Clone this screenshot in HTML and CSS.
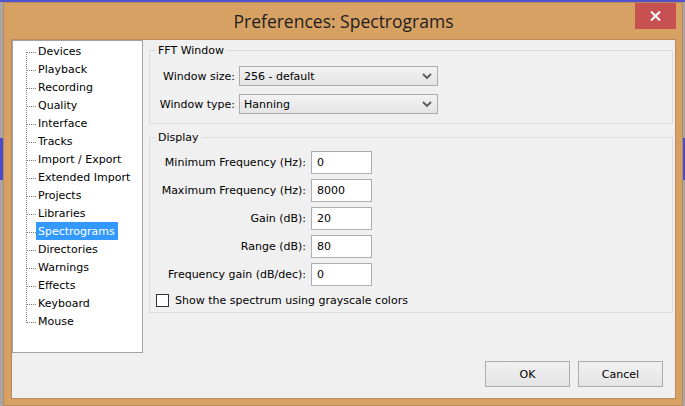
FILE: index.html
```html
<!DOCTYPE html>
<html>
<head>
<meta charset="utf-8">
<title>Preferences: Spectrograms</title>
<link rel="stylesheet" href="styles.css">
</head>
<body>
<div class="desktop">
  <div class="window">
    <div class="titlebar">
      <span class="title">Preferences: Spectrograms</span>
      <button class="close" aria-label="Close">
        <svg width="11" height="10" viewBox="0 0 11 10"><path d="M1 0.5 L10 9.5 M10 0.5 L1 9.5" stroke="#fff" stroke-width="2" fill="none"/></svg>
      </button>
    </div>
    <div class="client">
      <div class="main">
        <ul class="tree">
          <li><span>Devices</span></li>
          <li><span>Playback</span></li>
          <li><span>Recording</span></li>
          <li><span>Quality</span></li>
          <li><span>Interface</span></li>
          <li><span>Tracks</span></li>
          <li><span>Import / Export</span></li>
          <li><span>Extended Import</span></li>
          <li><span>Projects</span></li>
          <li><span>Libraries</span></li>
          <li><span class="sel">Spectrograms</span></li>
          <li><span>Directories</span></li>
          <li><span>Warnings</span></li>
          <li><span>Effects</span></li>
          <li><span>Keyboard</span></li>
          <li><span>Mouse</span></li>
        </ul>
        <div class="panel">
          <fieldset class="group fft">
            <legend>FFT Window</legend>
            <div class="fft-form">
              <label>Window size:</label>
              <div class="combo"><span>256 - default</span><svg width="10" height="6" viewBox="0 0 10 6"><path d="M1 1 L5 5 L9 1" stroke="#5a5a5a" stroke-width="1.8" fill="none"/></svg></div>
              <label>Window type:</label>
              <div class="combo"><span>Hanning</span><svg width="10" height="6" viewBox="0 0 10 6"><path d="M1 1 L5 5 L9 1" stroke="#5a5a5a" stroke-width="1.8" fill="none"/></svg></div>
            </div>
          </fieldset>
          <fieldset class="group display">
            <legend>Display</legend>
            <div class="display-form">
              <label>Minimum Frequency (Hz):</label>
              <div class="text">0</div>
              <label>Maximum Frequency (Hz):</label>
              <div class="text">8000</div>
              <label>Gain (dB):</label>
              <div class="text">20</div>
              <label>Range (dB):</label>
              <div class="text">80</div>
              <label>Frequency gain (dB/dec):</label>
              <div class="text">0</div>
              <div class="check-row"><span class="checkbox"></span><span>Show the spectrum using grayscale colors</span></div>
            </div>
          </fieldset>
        </div>
      </div>
      <div class="buttons">
        <button class="btn">OK</button>
        <button class="btn">Cancel</button>
      </div>
    </div>
  </div>
</div>
</body>
</html>
```

FILE: styles.css
```css
* { box-sizing: border-box; }

html, body {
  margin: 0;
  width: 685px;
  height: 406px;
  overflow: hidden;
}

body {
  font-family: "DejaVu Sans", sans-serif;
  font-size: 11px;
  color: #000;
  background:
    linear-gradient(to bottom, #5252cc 0, #5252cc 2px, transparent 2px),
    linear-gradient(to bottom, #a6a6a6 0, #a6a6a6 138px, #4b4bcf 138px, #4b4bcf 180px, #a6a6a6 180px);
}

.desktop {
  padding: 2px 0 0 3px;
}

.window {
  width: 680px;
  height: 404px;
  background: #d7a164;
  border: 1px solid #b8895a;
  padding: 0 6px 6px 7px;
  display: flex;
  flex-direction: column;
}

.titlebar {
  height: 36px;
  flex: none;
  display: grid;
  grid-template-columns: 1fr auto 1fr;
  align-items: center;
}

.title {
  grid-column: 2;
  font-family: "Open Sans", sans-serif;
  font-size: 17.5px;
  color: #1e1e1e;
  white-space: nowrap;
}

.close {
  grid-column: 3;
  justify-self: end;
  align-self: start;
  width: 41px;
  height: 26px;
  border: 0;
  padding: 0;
  background: #c75050;
  display: flex;
  align-items: center;
  justify-content: center;
}

.client {
  height: 360px;
  flex: none;
  border: 1px solid #b88b5c;
  background: #f0f0f0;
  display: flex;
  flex-direction: column;
}

.main {
  display: flex;
  gap: 6px;
}

.tree {
  width: 131px;
  height: 313px;
  margin: 0;
  padding: 1px 0 0 0;
  list-style: none;
  background: #fff;
  border: 1px solid #a3a3a3;
  position: relative;
}

.tree::before {
  content: "";
  position: absolute;
  left: 13px;
  top: 11px;
  height: 271px;
  border-left: 1px dotted #7d7d7d;
}

.tree li {
  height: 18px;
  padding-left: 23px;
  position: relative;
  white-space: nowrap;
}

.tree li::before {
  content: "";
  position: absolute;
  left: 14px;
  top: 10px;
  width: 9px;
  border-top: 1px dotted #7d7d7d;
}

.tree span {
  display: inline-block;
  height: 18px;
  line-height: 17px;
  padding: 1px 3px 0 2px;
}

.tree .sel {
  background: #3399ff;
  color: #fff;
}

.panel {
  width: 524px;
  display: flex;
  flex-direction: column;
}

.group {
  margin: 0;
  border: 1px solid #dcdcdc;
  min-width: 0;
}

.group legend {
  padding: 0 2px;
  line-height: 13px;
}

.fft {
  margin-top: 4px;
  padding: 9px 0 9px 6px;
}

.display {
  margin-top: 7px;
  padding: 7px 0 5px 6px;
}

.fft-form {
  display: grid;
  grid-template-columns: 79px 199px;
  column-gap: 4px;
  row-gap: 8px;
  align-items: center;
}

.fft-form label,
.display-form label {
  justify-self: end;
  white-space: nowrap;
}

.combo {
  height: 20px;
  border: 1px solid #acacac;
  background: linear-gradient(#f3f3f3, #e4e4e4);
  display: flex;
  align-items: center;
  justify-content: space-between;
  padding: 0 5px 0 4px;
}

.display-form {
  display: grid;
  grid-template-columns: 150px 61px;
  column-gap: 5px;
  row-gap: 5px;
  align-items: center;
}

.text {
  height: 23px;
  border: 1px solid #abadb3;
  background: #fff;
  padding: 0 0 0 5px;
  line-height: 21px;
}

.check-row {
  grid-column: 1 / -1;
  margin-top: 3px;
  height: 13px;
  display: flex;
  align-items: center;
  gap: 6px;
  white-space: nowrap;
}

.checkbox {
  width: 13px;
  height: 13px;
  border: 1px solid #333;
  background: #fff;
  flex: none;
}

.buttons {
  margin-top: auto;
  display: flex;
  justify-content: flex-end;
  gap: 8px;
  padding: 0 12px 11px 0;
}

.btn {
  width: 85px;
  height: 26px;
  border: 1px solid #acacac;
  background: linear-gradient(#f0f0f0, #e5e5e5);
  font-family: "DejaVu Sans", sans-serif;
  font-size: 11px;
  color: #000;
  padding: 0;
}
```
